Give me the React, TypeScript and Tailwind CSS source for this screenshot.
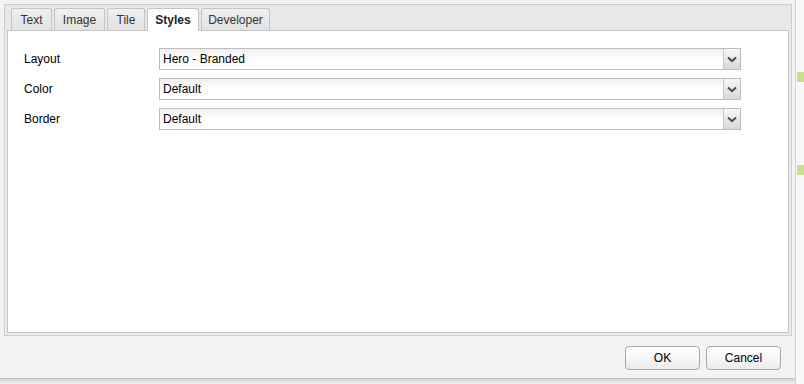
import React from 'react';

const tabs = [
  { name: 'Text', w: 'w-[41px]' },
  { name: 'Image', w: 'w-[51px]' },
  { name: 'Tile', w: 'w-[38px]' },
  { name: 'Styles', w: 'w-[52px]' },
  { name: 'Developer', w: 'w-[69px]' },
];
const fields = [
  { label: 'Layout', value: 'Hero - Branded' },
  { label: 'Color', value: 'Default' },
  { label: 'Border', value: 'Default' },
];

function Chevron() {
  return (
    <svg width="10" height="7" viewBox="0 0 10 7">
      <path d="M1 1.5 L5 5.2 L9 1.5" fill="none" stroke="#4a4a4a" strokeWidth="2" />
    </svg>
  );
}

function SelectBox({ value }: { value: string }) {
  return (
    <div className="flex h-[22px] w-[582px] border border-[#bdbdbd] bg-gradient-to-b from-[#efefef] via-white to-white">
      <div className="flex flex-1 items-center pl-[3px] text-[12px] text-black">{value}</div>
      <div className="flex w-[17px] items-center justify-center border-l border-[#c8c8c8] bg-gradient-to-b from-[#f7f7f7] to-[#d8d8d8]">
        <Chevron />
      </div>
    </div>
  );
}

export default function App() {
  return (
    <div
      className="flex h-[384px] w-[804px] bg-white text-[12px]"
      style={{ fontFamily: '"Liberation Sans", Arial, sans-serif' }}
    >
      {/* Dialog */}
      <div className="flex h-[384px] w-[796px] flex-col border-r border-[#d2d2d2] bg-[#f3f3f3]">
        <div className="flex flex-1 flex-col">
          <div className="ml-[4px] mt-[4px] flex h-[332px] w-[788px] flex-col border border-[#cdcdcd] bg-[#ececec]">
            {/* Tab strip */}
            <div className="flex h-[25px] items-end gap-[2px] bg-[#e8e8e8] pl-[6px]">
              {tabs.map((t) => {
                const active = t.name === 'Styles';
                return (
                  <div
                    key={t.name}
                    className={
                      active
                        ? `relative z-10 -mb-px flex h-[23px] ${t.w} items-center justify-center rounded-t-[3px] border border-b-0 border-[#c4c4c4] bg-white text-[12px] font-bold text-[#222]`
                        : `flex h-[22px] ${t.w} items-center justify-center rounded-t-[3px] border border-b-0 border-[#c4c4c4] bg-gradient-to-b from-[#f0f0f0] to-[#e2e2e2] text-[12px] text-[#333]`
                    }
                  >
                    {t.name}
                  </div>
                );
              })}
            </div>
            {/* Panel */}
            <div className="mx-[2px] mb-[2px] flex-1 border border-[#c6c6c6] bg-white pl-[16px] pt-[17px]">
              <div className="flex flex-col gap-[8px]">
                {fields.map((f) => (
                  <div key={f.label} className="flex items-center">
                    <div className="w-[135px] text-[12px] text-black">{f.label}</div>
                    <SelectBox value={f.value} />
                  </div>
                ))}
              </div>
            </div>
          </div>
          {/* Footer */}
          <div className="flex flex-1 items-center justify-end gap-[6px] pr-[14px] pt-[1px]">
            <button className="h-[24px] w-[75px] rounded-[4px] border border-[#a8a8a8] bg-gradient-to-b from-white to-[#ececec] text-[12px] text-black">
              OK
            </button>
            <button className="h-[24px] w-[75px] rounded-[4px] border border-[#a8a8a8] bg-gradient-to-b from-white to-[#ececec] text-[12px] text-black">
              Cancel
            </button>
          </div>
        </div>
        <div className="h-[6px] border-t border-[#bdbdbd] bg-gradient-to-b from-[#d6d6d6] to-[#f0f0f0]" />
      </div>
      {/* Page behind */}
      <div className="flex w-[8px] flex-col bg-[#f7f7f7]">
        <div className="h-[72px]" />
        <div className="ml-[1px] h-[10px] bg-[#c6e08f]" />
        <div className="h-[83px]" />
        <div className="ml-[1px] h-[10px] bg-[#c6e08f]" />
      </div>
    </div>
  );
}
